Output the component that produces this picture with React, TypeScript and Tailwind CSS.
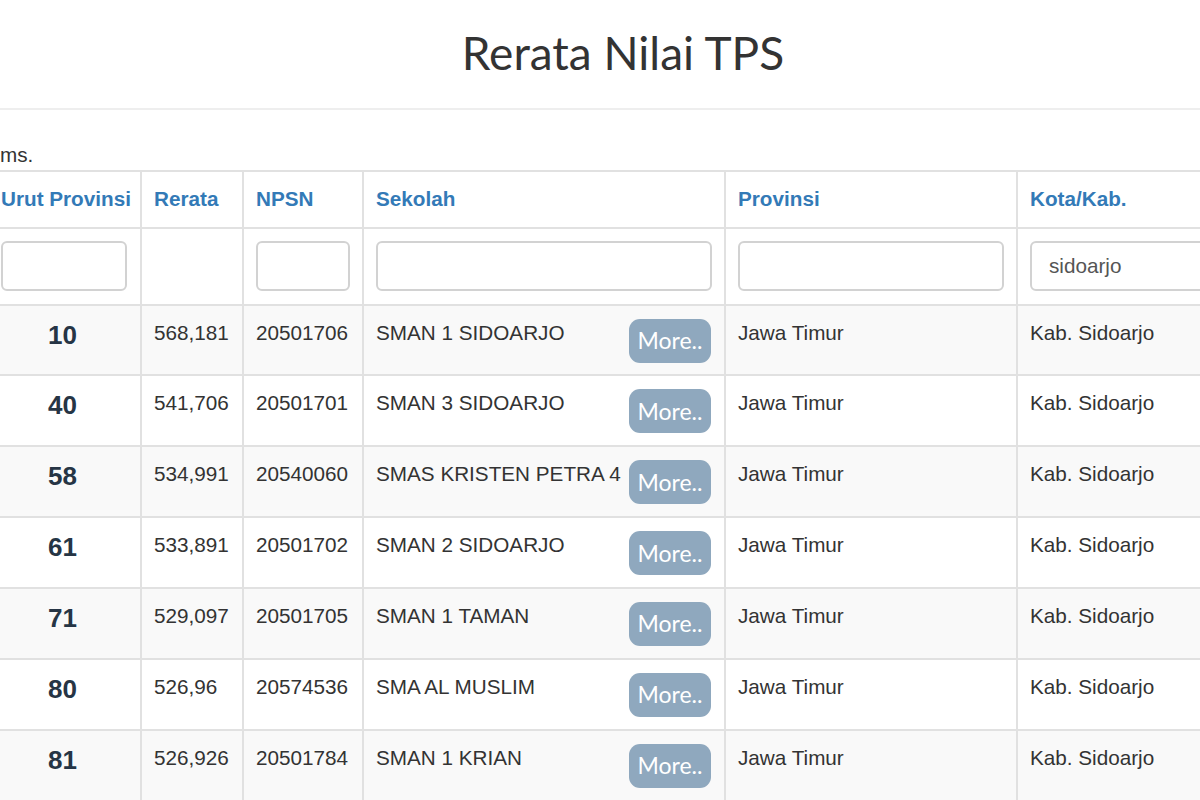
import React from "react";

type Row = { rank: number; rerata: string; npsn: string; sekolah: string; provinsi: string; kota: string };

const rows: Row[] = [
  { rank: 10, rerata: "568,181", npsn: "20501706", sekolah: "SMAN 1 SIDOARJO", provinsi: "Jawa Timur", kota: "Kab. Sidoarjo" },
  { rank: 40, rerata: "541,706", npsn: "20501701", sekolah: "SMAN 3 SIDOARJO", provinsi: "Jawa Timur", kota: "Kab. Sidoarjo" },
  { rank: 58, rerata: "534,991", npsn: "20540060", sekolah: "SMAS KRISTEN PETRA 4", provinsi: "Jawa Timur", kota: "Kab. Sidoarjo" },
  { rank: 61, rerata: "533,891", npsn: "20501702", sekolah: "SMAN 2 SIDOARJO", provinsi: "Jawa Timur", kota: "Kab. Sidoarjo" },
  { rank: 71, rerata: "529,097", npsn: "20501705", sekolah: "SMAN 1 TAMAN", provinsi: "Jawa Timur", kota: "Kab. Sidoarjo" },
  { rank: 80, rerata: "526,96", npsn: "20574536", sekolah: "SMA AL MUSLIM", provinsi: "Jawa Timur", kota: "Kab. Sidoarjo" },
  { rank: 81, rerata: "526,926", npsn: "20501784", sekolah: "SMAN 1 KRIAN", provinsi: "Jawa Timur", kota: "Kab. Sidoarjo" },
];

const th = "border-2 border-[#e1e1e1] px-[12px] text-left align-middle font-bold text-[#337ab7]";
const td = "border-2 border-[#e1e1e1] px-[12px] pt-[12px] align-top";
const input = "block h-[50px] w-full rounded-[6px] border-2 border-[#d2d2d2] bg-white px-[17px] text-[20.7px] text-[#555] outline-none";

export default function App() {
  return (
    <div className="h-[800px] w-[1200px] overflow-hidden bg-white text-[20.7px] leading-[1.43] text-[#333]" style={{ fontFamily: '"Liberation Sans", Arial, sans-serif' }}>
      <div className="h-[110px] border-b-2 border-[#eeeeee] pl-[46px] pt-[25px] text-center">
        <h1 className="text-[46px] font-normal leading-[1.2] text-[#333]" style={{ fontFamily: "Lato, sans-serif" }}>
          Rerata Nilai TPS
        </h1>
      </div>

      <div className="mt-[30px]">ms.</div>

      <table className="ml-[-13px] w-[1289px] table-fixed border-collapse">
        <colgroup>
          <col className="w-[153px]" />
          <col className="w-[102px]" />
          <col className="w-[120px]" />
          <col className="w-[362px]" />
          <col className="w-[292px]" />
          <col className="w-[260px]" />
        </colgroup>
        <thead>
          <tr className="h-[57px]">
            <th className={th + " whitespace-nowrap"}>Urut Provinsi</th>
            <th className={th}>Rerata</th>
            <th className={th}>NPSN</th>
            <th className={th}>Sekolah</th>
            <th className={th}>Provinsi</th>
            <th className={th}>Kota/Kab.</th>
          </tr>
          <tr className="h-[77px]">
            <td className="border-2 border-[#e1e1e1] pl-[12px] pr-[13px] align-middle"><input className={input} /></td>
            <td className="border-2 border-[#e1e1e1]"></td>
            <td className="border-2 border-[#e1e1e1] px-[12px] align-middle"><input className={input} /></td>
            <td className="border-2 border-[#e1e1e1] px-[12px] align-middle"><input className={input} /></td>
            <td className="border-2 border-[#e1e1e1] px-[12px] align-middle"><input className={input} /></td>
            <td className="border-2 border-[#e1e1e1] px-[12px] align-middle"><input className={input} defaultValue="sidoarjo" /></td>
          </tr>
        </thead>
        <tbody>
          {rows.map((r, i) => (
            <tr key={r.npsn} className={`h-[70.85px] ${i % 2 === 0 ? "bg-[#f9f9f9]" : "bg-white"}`}>
              <td className={td + " pr-[16px] text-center text-[26px] font-bold leading-[1.15] text-[#263545]"}>
                <div className="pt-[3px]">{r.rank}</div>
              </td>
              <td className={td}>{r.rerata}</td>
              <td className={td}>{r.npsn}</td>
              <td className={td + " pr-[13px]"}>
                <button
                  className="float-right mt-[1px] h-[44px] w-[82px] rounded-[11px] bg-[#8fa8be] text-[23px] leading-none text-white"
                  style={{ fontFamily: "Lato, sans-serif" }}
                >
                  More..
                </button>
                {r.sekolah}
              </td>
              <td className={td}>{r.provinsi}</td>
              <td className={td}>{r.kota}</td>
            </tr>
          ))}
        </tbody>
      </table>
    </div>
  );
}
